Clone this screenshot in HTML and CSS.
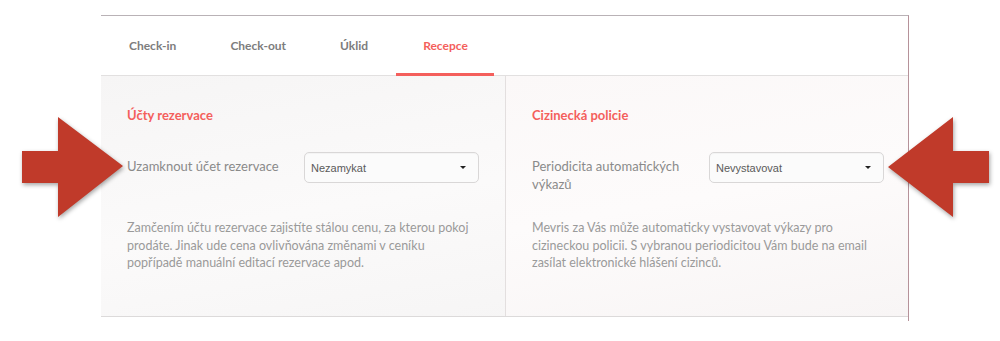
FILE: index.html
```html
<!DOCTYPE html>
<html lang="cs">
<head>
    <meta charset="UTF-8">
    <meta name="viewport" content="width=device-width, initial-scale=1.0">
    <title>Nastavení - Recepce</title>
    <link rel="stylesheet" href="styles.css">
</head>
<body>
    <div class="page">
        <div class="frame">
            <nav class="tabs">
                <a class="tab">Check-in</a>
                <a class="tab">Check-out</a>
                <a class="tab">Úklid</a>
                <a class="tab active">Recepce</a>
            </nav>

            <div class="panels">
                <section class="panel">
                    <h2>Účty rezervace</h2>
                    <div class="row">
                        <label>Uzamknout účet rezervace</label>
                        <div class="select">
                            <span>Nezamykat</span>
                            <i class="caret"></i>
                        </div>
                    </div>
                    <p class="note">Zamčením účtu rezervace zajistíte stálou cenu, za kterou pokoj prodáte. Jinak ude cena ovlivňována změnami v ceníku popřípadě manuální editací rezervace apod.</p>
                </section>

                <section class="panel panel-right">
                    <h2>Cizinecká policie</h2>
                    <div class="row">
                        <label>Periodicita automatických výkazů</label>
                        <div class="select">
                            <span>Nevystavovat</span>
                            <i class="caret"></i>
                        </div>
                    </div>
                    <p class="note">Mevris za Vás může automaticky vystavovat výkazy pro cizineckou policii. S vybranou periodicitou Vám bude na email zasílat elektronické hlášení cizinců.</p>
                </section>
            </div>
        </div>
    </div>

    <!-- callout arrows -->
    <svg class="arrow arrow-left" width="110" height="110" viewBox="0 0 110 110">
        <polygon points="2,34 38,34 38,0 103,49 38,100 38,66 2,66" />
    </svg>
    <svg class="arrow arrow-right" width="110" height="110" viewBox="0 0 110 110">
        <polygon points="101,34 65,34 65,0 0,50 65,100 65,66 101,66" />
    </svg>
</body>
</html>
```

FILE: styles.css
```css
body {
    margin: 0;
    padding: 0;
    background-color: #ffffff;
    font-family: 'Lato', 'Open Sans', sans-serif;
    color: #8c8c8c;
    position: relative;
    width: 1000px;
    height: 341px;
    overflow: hidden;
}

.page {
    padding: 15px 0 0 101px;
}

.frame {
    width: 807px;
    border-top: 1px solid #b9b2b6;
    border-right: 1px solid #b6929a;
    padding-bottom: 4px;
}

.tabs {
    display: flex;
    gap: 2px;
    height: 59px;
    padding-left: 2px;
    border-bottom: 1px solid #e2e0e0;
}

.tab {
    display: flex;
    align-items: center;
    padding: 1px 26px 0 26px;
    font-size: 12px;
    font-weight: bold;
    color: #7d7d7d;
    border-bottom: 3px solid transparent;
    margin-bottom: -1px;
}

.tab:last-child {
    padding-left: 27px;
}

.tab.active {
    color: #f45f5c;
    border-bottom-color: #f45f5c;
}

.panels {
    display: flex;
    height: 240px;
    border-bottom: 1px solid #dcdada;
    background: linear-gradient(170deg, #f6f5f5 0%, #fbfafa 45%, #f4f3f3 100%);
}

.panel {
    flex: 0 0 404px;
    min-width: 0;
    padding: 30px 26px 0 26px;
    box-sizing: border-box;
}

.panel-right {
    flex: 1 1 0;
    border-left: 1px solid #e3dfdf;
    background: linear-gradient(170deg, #fbf8f8 0%, #fdfbfb 50%, #f8f5f5 100%);
}

h2 {
    margin: 0;
    font-size: 13px;
    line-height: 18px;
    font-weight: bold;
    color: #f45f5c;
}

.row {
    display: flex;
    align-items: flex-start;
    height: 31px;
    margin-top: 28px;
}

.row label {
    flex: 0 0 158px;
    margin-right: 19px;
    padding-top: 5px;
    font-size: 13px;
    line-height: 18px;
    color: #8a8a8a;
}

.select {
    flex: 0 0 175px;
    height: 31px;
    box-sizing: border-box;
    border: 1px solid #d9d7d7;
    border-radius: 5px;
    background: #fbfbfb;
    box-shadow: inset 0 1px 1px rgba(0, 0, 0, 0.03);
    display: flex;
    align-items: center;
    justify-content: space-between;
    padding: 0 12px 0 6px;
    font-family: 'Liberation Sans', Arial, sans-serif;
    font-size: 11px;
    color: #5a5a5a;
}

.caret {
    width: 0;
    height: 0;
    border-left: 3px solid transparent;
    border-right: 3px solid transparent;
    border-top: 3px solid #222;
}

.note {
    margin: 36px 0 0 0;
    font-size: 12.5px;
    line-height: 17.5px;
    color: #9a9a9a;
}

.arrow {
    position: absolute;
    filter: drop-shadow(1px 2px 2px rgba(0, 0, 0, 0.35));
}

.arrow polygon {
    fill: #c03a2a;
}

.arrow-left {
    left: 20px;
    top: 117px;
}

.arrow-right {
    left: 888px;
    top: 117px;
}
```
